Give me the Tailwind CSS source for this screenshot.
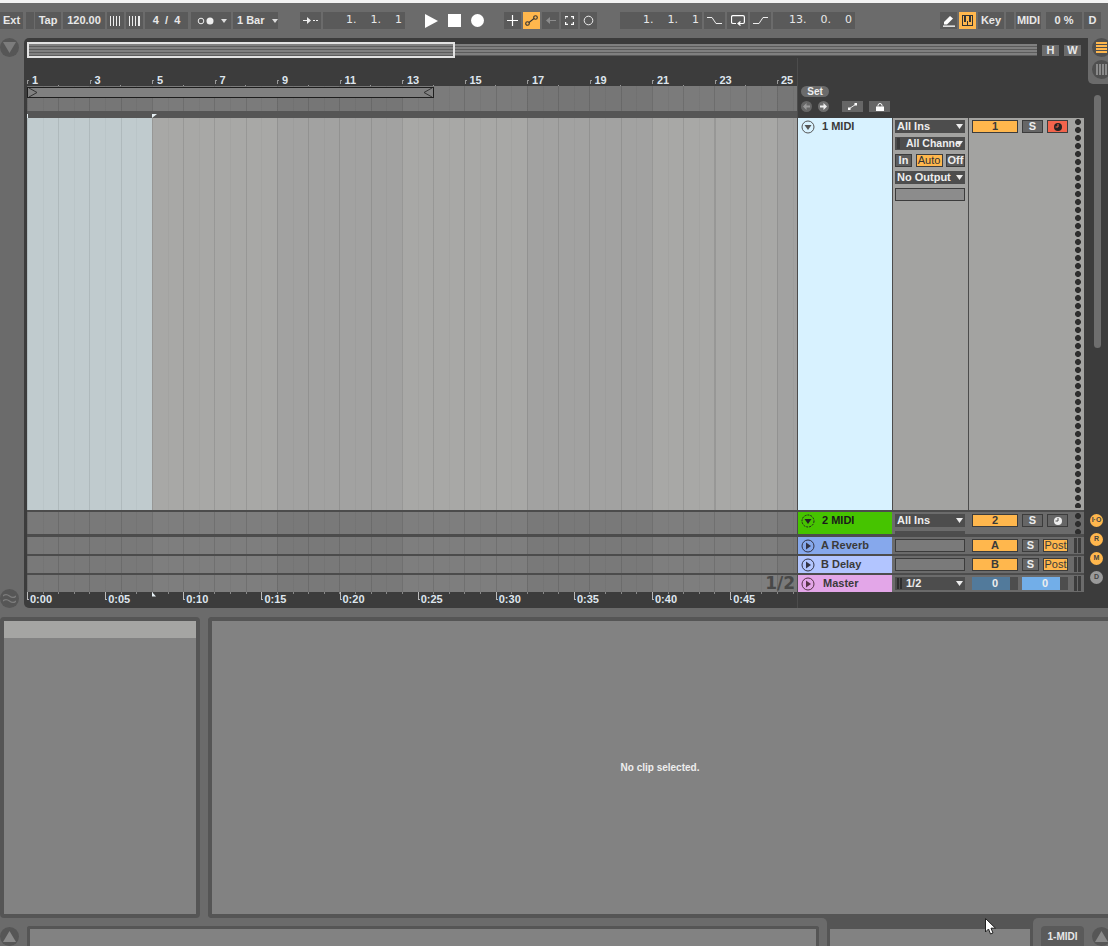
<!DOCTYPE html>
<html lang="en">
<head>
  <meta charset="UTF-8" />
  <title>Live Set</title>
  <script src="https://cdn.jsdelivr.net/npm/@tailwindcss/browser@4"></script>
</head>
<body class="bg-[#6b6b6b] font-['Liberation_Sans',sans-serif] text-[11px] font-bold text-[#e8e8e8]">
<div class="relative w-[1108px] h-[946px] overflow-hidden flex flex-col">

  <!-- top strip -->
  <div class="h-[3px] shrink-0 bg-[#f2f2f2]"></div>

  <!-- transport bar -->
  <div class="h-[35px] shrink-0 pt-[9px] flex items-start whitespace-nowrap">
    <div class="w-[23px] h-[17px] bg-[#5a5a5a] flex items-center justify-center">Ext</div>
    <div class="w-[8px] h-[17px] ml-[3px] bg-[#5a5a5a]"></div>
    <div class="w-[26px] h-[17px] ml-[1px] bg-[#5a5a5a] flex items-center justify-center">Tap</div>
    <div class="w-[42px] h-[17px] ml-[2px] bg-[#5a5a5a] flex items-center justify-center">120.00</div>
    <div class="w-[17px] h-[17px] ml-[2px] bg-[#5a5a5a] flex items-center justify-center">
      <svg width="11" height="10" fill="#eee"><rect x="0" width="1" height="10"/><rect x="3" width="1" height="10"/><rect x="6" width="1" height="10"/><rect x="9" width="1" height="10"/></svg>
    </div>
    <div class="w-[17px] h-[17px] ml-[2px] bg-[#5a5a5a] flex items-center justify-center">
      <svg width="12" height="10" fill="#eee"><rect x="0" width="1" height="10"/><rect x="3" width="1" height="10"/><rect x="6" width="1" height="10"/><rect x="9" width="2" height="10"/></svg>
    </div>
    <div class="w-[43px] h-[17px] ml-[2px] bg-[#5a5a5a] flex items-center justify-center whitespace-pre">4  /  4</div>
    <div class="w-[40px] h-[17px] ml-[3px] bg-[#5a5a5a] flex items-center pl-[6px] gap-[1px]">
      <svg width="20" height="8"><circle cx="4" cy="4" r="2.8" fill="none" stroke="#eee"/><circle cx="13" cy="4" r="3.5" fill="#eee"/></svg>
      <svg class="ml-[3px]" width="6" height="4" fill="#ddd"><path d="M0 0h6L3 4z"/></svg>
    </div>
    <div class="w-[45px] h-[17px] ml-[2px] bg-[#5a5a5a] flex items-center pl-[4px]">1 Bar
      <svg class="ml-[7px]" width="6" height="4" fill="#ddd"><path d="M0 0h6L3 4z"/></svg>
    </div>
    <div class="w-[21px] h-[17px] ml-[22px] bg-[#5a5a5a] flex items-center justify-center">
      <svg width="16" height="7" fill="#eee"><rect y="3" width="6" height="1"/><path d="M4 0l4 3.500-4 3.500z"/><rect x="10" y="3" width="2" height="1"/><rect x="13" y="3" width="2" height="1"/></svg>
    </div>
    <div class="w-[82px] h-[17px] ml-[2px] bg-[#5a5a5a] flex items-center justify-end pr-[3px] font-['DejaVu_Sans',sans-serif] font-normal whitespace-pre">1.    1.    1</div>
    <div class="w-[13px] h-[17px] ml-[20px] flex items-center justify-center">
      <svg width="13" height="14" fill="#fff"><path d="M0 0l13 7L0 14z"/></svg>
    </div>
    <div class="w-[13px] h-[13px] ml-[10px] mt-[2px] bg-white"></div>
    <div class="w-[13px] h-[13px] ml-[10px] mt-[2px] bg-white rounded-full"></div>
    <div class="w-[17px] h-[17px] ml-[20px] bg-[#5a5a5a] flex items-center justify-center">
      <svg width="11" height="11" stroke="#fff" stroke-width="1.200"><path d="M5.500 0v11M0 5.500h11"/></svg>
    </div>
    <div class="w-[17px] h-[17px] ml-[2px] bg-[#ffb74d] flex items-center justify-center">
      <svg width="13" height="11" fill="none" stroke="#333" stroke-width="1.100"><circle cx="2.500" cy="8.500" r="1.800"/><circle cx="10.500" cy="2.500" r="1.800"/><path d="M4 7.500l5-4"/></svg>
    </div>
    <div class="w-[17px] h-[17px] ml-[2px] bg-[#5a5a5a] flex items-center justify-center">
      <svg width="10" height="7" fill="#8c8c8c"><path d="M0 3.500L4 0v3h6v1H4v3z"/></svg>
    </div>
    <div class="w-[17px] h-[17px] ml-[2px] bg-[#5a5a5a] flex items-center justify-center">
      <svg width="9" height="9" fill="none" stroke="#fff" stroke-width="1.200"><path d="M0 3V.6h3M6 .6h2.400V3M8.400 6v2.400H6M3 8.400H.6V6"/></svg>
    </div>
    <div class="w-[17px] h-[17px] ml-[2px] bg-[#5a5a5a] flex items-center justify-center">
      <svg width="11" height="11" fill="none" stroke="#eee"><circle cx="5.500" cy="5.500" r="4.300"/></svg>
    </div>
    <div class="w-[82px] h-[17px] ml-[23px] bg-[#5a5a5a] flex items-center justify-end pr-[3px] font-['DejaVu_Sans',sans-serif] font-normal whitespace-pre">1.    1.    1</div>
    <div class="w-[21px] h-[17px] ml-[2px] bg-[#5a5a5a] flex items-center justify-center">
      <svg width="15" height="9" fill="none" stroke="#eee"><path d="M0 1.500h5l4 6h6"/></svg>
    </div>
    <div class="w-[21px] h-[17px] ml-[2px] bg-[#5a5a5a] flex items-center justify-center">
      <svg width="14" height="12" fill="none" stroke="#fff" stroke-width="1.200"><path d="M5 8.500H2a1.500 1.500 0 0 1-1.500-1.500V2A1.500 1.500 0 0 1 2 .6h10A1.500 1.500 0 0 1 13.400 2v5A1.500 1.500 0 0 1 12 8.500H8"/><path d="M9.500 6.500L7 8.500l2.500 2"/></svg>
    </div>
    <div class="w-[21px] h-[17px] ml-[2px] bg-[#5a5a5a] flex items-center justify-center">
      <svg width="15" height="9" fill="none" stroke="#eee"><path d="M0 7.500h6l4-6h5"/></svg>
    </div>
    <div class="w-[82px] h-[17px] ml-[2px] bg-[#5a5a5a] flex items-center justify-end pr-[3px] font-['DejaVu_Sans',sans-serif] font-normal whitespace-pre">13.    0.    0</div>
    <div class="w-[17px] h-[17px] ml-[85px] bg-[#5a5a5a] flex items-center justify-center">
      <svg width="12" height="13" fill="#fff"><path d="M1 8l6-6 3 2.500-6 6H1z"/><rect y="11.500" width="12" height="1.300"/></svg>
    </div>
    <div class="w-[17px] h-[17px] ml-[2px] bg-[#ffb74d] flex items-center justify-center">
      <svg width="11" height="11"><rect x=".5" y=".5" width="10" height="10" fill="none" stroke="#333"/><rect x="2" y="1" width="2" height="6" fill="#333"/><rect x="7" y="1" width="2" height="6" fill="#333"/><rect x="5" y="6" width="1" height="4" fill="#333"/></svg>
    </div>
    <div class="w-[26px] h-[17px] ml-[2px] bg-[#5a5a5a] flex items-center justify-center">Key</div>
    <div class="w-[8px] h-[17px] ml-[2px] bg-[#5a5a5a]"></div>
    <div class="w-[25px] h-[17px] ml-[2px] bg-[#5a5a5a] flex items-center justify-center">MIDI</div>
    <div class="w-[36px] h-[17px] ml-[5px] bg-[#5a5a5a] flex items-center justify-center">0 %</div>
    <div class="w-[17px] h-[17px] ml-[2px] bg-[#5a5a5a] flex items-center justify-center">D</div>
  </div>

  <!-- arrangement area -->
  <div class="h-[570px] shrink-0 flex items-start">
    <div class="w-[24px] h-full shrink-0 flex flex-col justify-between items-start">
      <div class="w-[19px] h-[19px] rounded-full bg-[#565656] flex items-center justify-center">
        <svg width="13" height="11" fill="#7c7c7c"><path d="M0 0h13L6.500 11z"/></svg>
      </div>
      <div class="w-[19px] h-[19px] rounded-full bg-[#565656] flex items-center justify-center">
        <svg width="13" height="11" fill="none" stroke="#7c7c7c" stroke-width="1.300"><path d="M0 3c2-2 4-2 6.500 0s4.500 2 6.500 0M0 8c2-2 4-2 6.500 0s4.500 2 6.500 0"/></svg>
      </div>
    </div>

    <div class="w-[1084px] shrink-0 h-full bg-[#3c3c3c] rounded-l-[5px] flex">
      <div class="w-[1060px] shrink-0 h-full pl-[3px] pt-[4px] flex flex-col">
        <!-- overview -->
        <div class="h-[16px] shrink-0 relative flex items-center">
          <div class="w-[1010px] h-[12px] bg-[repeating-linear-gradient(180deg,#808080_0,#808080_2px,#5c5c5c_2px,#5c5c5c_3px)]"></div>
          <div class="absolute left-0 top-0 w-[428px] h-[16px] border-[2px] border-[#e2e2e2]"></div>
          <div class="w-[17px] h-[11px] ml-[5px] bg-[#6b6b6b] flex items-center justify-center">H</div>
          <div class="w-[17px] h-[11px] ml-[5px] bg-[#6b6b6b] flex items-center justify-center">W</div>
        </div>

        <div class="flex flex-1 min-h-0">
          <!-- timeline column -->
          <div class="w-[770px] shrink-0 flex flex-col">
            <!-- beat ruler -->
            <div class="h-[28px] shrink-0 flex items-end text-[#dfe6ee] leading-[12px] bg-[repeating-linear-gradient(90deg,transparent_0,transparent_31px,#999_31px,#999_32px,transparent_32px,transparent_62.5px)] bg-[length:100%_1px] bg-bottom bg-no-repeat">
              <div class="w-[62.5px] shrink-0 flex"><span class="border-l border-t border-[#999] w-[2px] h-[4px] mt-[6px] mr-[3px]"></span>1</div>
              <div class="w-[62.5px] shrink-0 flex"><span class="border-l border-t border-[#999] w-[2px] h-[4px] mt-[6px] mr-[3px]"></span>3</div>
              <div class="w-[62.5px] shrink-0 flex"><span class="border-l border-t border-[#999] w-[2px] h-[4px] mt-[6px] mr-[3px]"></span>5</div>
              <div class="w-[62.5px] shrink-0 flex"><span class="border-l border-t border-[#999] w-[2px] h-[4px] mt-[6px] mr-[3px]"></span>7</div>
              <div class="w-[62.5px] shrink-0 flex"><span class="border-l border-t border-[#999] w-[2px] h-[4px] mt-[6px] mr-[3px]"></span>9</div>
              <div class="w-[62.5px] shrink-0 flex"><span class="border-l border-t border-[#999] w-[2px] h-[4px] mt-[6px] mr-[3px]"></span>11</div>
              <div class="w-[62.5px] shrink-0 flex"><span class="border-l border-t border-[#999] w-[2px] h-[4px] mt-[6px] mr-[3px]"></span>13</div>
              <div class="w-[62.5px] shrink-0 flex"><span class="border-l border-t border-[#999] w-[2px] h-[4px] mt-[6px] mr-[3px]"></span>15</div>
              <div class="w-[62.5px] shrink-0 flex"><span class="border-l border-t border-[#999] w-[2px] h-[4px] mt-[6px] mr-[3px]"></span>17</div>
              <div class="w-[62.5px] shrink-0 flex"><span class="border-l border-t border-[#999] w-[2px] h-[4px] mt-[6px] mr-[3px]"></span>19</div>
              <div class="w-[62.5px] shrink-0 flex"><span class="border-l border-t border-[#999] w-[2px] h-[4px] mt-[6px] mr-[3px]"></span>21</div>
              <div class="w-[62.5px] shrink-0 flex"><span class="border-l border-t border-[#999] w-[2px] h-[4px] mt-[6px] mr-[3px]"></span>23</div>
              <div class="w-[20px] flex"><span class="border-l border-t border-[#999] w-[2px] h-[4px] mt-[6px] mr-[2px]"></span>25</div>
            </div>

            <!-- locators + scrub -->
            <div class="h-[25px] shrink-0 relative bg-[repeating-linear-gradient(90deg,rgba(0,0,0,.08)_0,rgba(0,0,0,.08)_1px,transparent_1px,transparent_31.25px),repeating-linear-gradient(90deg,rgba(0,0,0,.04)_0,rgba(0,0,0,.04)_1px,transparent_1px,transparent_15.625px),repeating-linear-gradient(90deg,#767676_0,#767676_125px,#7b7b7b_125px,#7b7b7b_250px)]">
              <div class="absolute left-0 top-[1px] w-[407px] h-[11px] bg-[#808080] border border-[#1e1e1e] flex items-center justify-between px-[1px]">
                <svg width="9" height="9" fill="none" stroke="#333"><path d="M0 0l8 4.500L0 9"/></svg>
                <svg width="9" height="9" fill="none" stroke="#333"><path d="M9 0L1 4.500 9 9"/></svg>
              </div>
            </div>
            <div class="h-[7px] shrink-0 bg-[#555] relative">
              <div class="absolute left-0 top-[3px] w-[1px] h-[4px] bg-[#e8f2f6]"></div>
              <svg class="absolute left-[125px] top-[3px]" width="5" height="4" fill="#e8f2f6"><path d="M0 0h5L0 4z"/></svg>
            </div>

            <!-- track 1 lane -->
            <div class="h-[392px] shrink-0 flex">
              <div class="w-[125px] bg-[repeating-linear-gradient(90deg,rgba(0,0,0,.06)_0,rgba(0,0,0,.06)_1px,transparent_1px,transparent_31.25px),repeating-linear-gradient(90deg,rgba(0,0,0,.03)_0,rgba(0,0,0,.03)_1px,transparent_1px,transparent_15.625px),linear-gradient(#c0cbce,#c0cbce)]"></div>
              <div class="flex-1 bg-[repeating-linear-gradient(90deg,rgba(0,0,0,.07)_0,rgba(0,0,0,.07)_1px,transparent_1px,transparent_31.25px),repeating-linear-gradient(90deg,rgba(0,0,0,.03)_0,rgba(0,0,0,.03)_1px,transparent_1px,transparent_15.625px),repeating-linear-gradient(90deg,#a8a8a6_0,#a8a8a6_125px,#a2a2a1_125px,#a2a2a1_250px)]"></div>
            </div>
            <div class="h-[2px] shrink-0 bg-[#4c4c4c]"></div>
            <div class="h-[22px] shrink-0 bg-[repeating-linear-gradient(90deg,rgba(0,0,0,.08)_0,rgba(0,0,0,.08)_1px,transparent_1px,transparent_31.25px),repeating-linear-gradient(90deg,rgba(0,0,0,.04)_0,rgba(0,0,0,.04)_1px,transparent_1px,transparent_15.625px),repeating-linear-gradient(90deg,#797979_0,#797979_125px,#7e7e7e_125px,#7e7e7e_250px)]"></div>
            <div class="h-[3px] shrink-0 bg-[#4c4c4c]"></div>
            <div class="h-[17px] shrink-0 bg-[repeating-linear-gradient(90deg,rgba(0,0,0,.08)_0,rgba(0,0,0,.08)_1px,transparent_1px,transparent_31.25px),repeating-linear-gradient(90deg,rgba(0,0,0,.04)_0,rgba(0,0,0,.04)_1px,transparent_1px,transparent_15.625px),repeating-linear-gradient(90deg,#797979_0,#797979_125px,#7e7e7e_125px,#7e7e7e_250px)]"></div>
            <div class="h-[2px] shrink-0 bg-[#4c4c4c]"></div>
            <div class="h-[17px] shrink-0 bg-[repeating-linear-gradient(90deg,rgba(0,0,0,.08)_0,rgba(0,0,0,.08)_1px,transparent_1px,transparent_31.25px),repeating-linear-gradient(90deg,rgba(0,0,0,.04)_0,rgba(0,0,0,.04)_1px,transparent_1px,transparent_15.625px),repeating-linear-gradient(90deg,#797979_0,#797979_125px,#7e7e7e_125px,#7e7e7e_250px)]"></div>
            <div class="h-[2px] shrink-0 bg-[#4c4c4c]"></div>
            <div class="h-[17px] shrink-0 relative bg-[repeating-linear-gradient(90deg,rgba(0,0,0,.08)_0,rgba(0,0,0,.08)_1px,transparent_1px,transparent_31.25px),repeating-linear-gradient(90deg,rgba(0,0,0,.04)_0,rgba(0,0,0,.04)_1px,transparent_1px,transparent_15.625px),repeating-linear-gradient(90deg,#797979_0,#797979_125px,#7e7e7e_125px,#7e7e7e_250px)]">
              <span class="absolute right-[2px] top-0 font-['DejaVu_Sans',sans-serif] text-[17px] leading-[17px] text-[#484848]">1/2</span>
            </div>

            <!-- time ruler -->
            <div class="h-[16px] shrink-0 relative flex text-[#dfe6ee] leading-[15px] bg-[repeating-linear-gradient(90deg,#888_0,#888_1px,transparent_1px,transparent_15.625px)] bg-[length:100%_2px] bg-top bg-no-repeat">
              <div class="w-[78.125px] shrink-0 flex"><span class="w-[2px] h-[8px] border-l border-b border-[#bbb] mr-[1px]"></span>0:00</div>
              <div class="w-[78.125px] shrink-0 flex"><span class="w-[2px] h-[8px] border-l border-b border-[#bbb] mr-[1px]"></span>0:05</div>
              <div class="w-[78.125px] shrink-0 flex"><span class="w-[2px] h-[8px] border-l border-b border-[#bbb] mr-[1px]"></span>0:10</div>
              <div class="w-[78.125px] shrink-0 flex"><span class="w-[2px] h-[8px] border-l border-b border-[#bbb] mr-[1px]"></span>0:15</div>
              <div class="w-[78.125px] shrink-0 flex"><span class="w-[2px] h-[8px] border-l border-b border-[#bbb] mr-[1px]"></span>0:20</div>
              <div class="w-[78.125px] shrink-0 flex"><span class="w-[2px] h-[8px] border-l border-b border-[#bbb] mr-[1px]"></span>0:25</div>
              <div class="w-[78.125px] shrink-0 flex"><span class="w-[2px] h-[8px] border-l border-b border-[#bbb] mr-[1px]"></span>0:30</div>
              <div class="w-[78.125px] shrink-0 flex"><span class="w-[2px] h-[8px] border-l border-b border-[#bbb] mr-[1px]"></span>0:35</div>
              <div class="w-[78.125px] shrink-0 flex"><span class="w-[2px] h-[8px] border-l border-b border-[#bbb] mr-[1px]"></span>0:40</div>
              <div class="w-[48px] flex"><span class="w-[2px] h-[8px] border-l border-b border-[#bbb] mr-[1px]"></span>0:45</div>
              <svg class="absolute left-[125px] top-0" width="4" height="5" fill="#e8f2f6"><path d="M0 0l4 4.500H0z"/></svg>
            </div>
          </div>

          <!-- track headers -->
          <div class="w-[287px] shrink-0 border-l border-[#4c4c4c] flex flex-col text-[#3a3a3a]">
            <div class="h-[60px] shrink-0 bg-[#3c3c3c] pl-[3px] flex flex-col text-[#eee]">
              <div class="h-[28px] shrink-0"></div>
              <div class="w-[28px] h-[11px] rounded-full bg-[#6b6b6b] flex items-center justify-center text-[10px]">Set</div>
              <div class="flex items-center mt-[4px]">
                <span class="w-[11px] h-[11px] rounded-full bg-[#666] flex items-center justify-center">
                  <svg width="7" height="7" fill="#9a9a9a"><path d="M0 3.500L3.500 0v2.500H7v2H3.500V7z"/></svg>
                </span>
                <span class="w-[11px] h-[11px] rounded-full bg-[#6e6e6e] ml-[6px] flex items-center justify-center">
                  <svg width="7" height="7" fill="#eee"><path d="M7 3.500L3.500 0v2.500H0v2h3.500V7z"/></svg>
                </span>
                <span class="w-[21px] h-[11px] bg-[#666] ml-[13px] flex items-center justify-center">
                  <svg width="9" height="7" fill="#fff"><path d="M1.500 5.500l6-4" stroke="#fff" stroke-width=".8"/><rect x="0" y="4.500" width="2.500" height="2.500"/><rect x="6.500" y="0" width="2.500" height="2.500"/></svg>
                </span>
                <span class="w-[21px] h-[11px] bg-[#666] ml-[6px] flex items-center justify-center">
                  <svg width="8" height="8"><rect x="0" y="3.500" width="8" height="4.500" fill="#fff"/><path d="M2 3.500V2.500a2 2 0 0 1 4 0v1" fill="none" stroke="#fff"/></svg>
                </span>
              </div>
            </div>

            <!-- track 1 -->
            <div class="h-[392px] shrink-0 flex bg-[#4c4c4c]">
              <div class="w-[94px] bg-[#d8f2ff] flex items-start pl-[3px] pt-[2px]">
                <svg class="shrink-0" width="14" height="14" fill="none" stroke="#555"><circle cx="7" cy="7" r="6"/><path d="M3.500 5h7L7 10z" fill="#555" stroke="none"/></svg>
                <span class="ml-[7px] leading-[12px]">1 MIDI</span>
              </div>
              <div class="w-[75px] ml-[1px] bg-[#a3a3a1] pl-[2px] pr-[3px] pt-[2px] flex flex-col gap-[4px] text-[#eee]">
                <div class="h-[13px] bg-[#4d4d4d] flex items-center justify-between pl-[2px] pr-[2px]">All Ins <svg width="7" height="5" fill="#eee"><path d="M0 0h7L3.500 5z"/></svg></div>
                <div class="h-[13px] bg-[#4d4d4d] flex items-center pr-[2px]">
                  <span class="w-[3px] h-[11px] ml-[2px] bg-[#3a3a3a] shrink-0"></span>
                  <span class="ml-[6px] w-[50px] shrink-0 text-[10.5px] whitespace-nowrap">All Channe</span>
                  <svg class="shrink-0" width="7" height="5" fill="#eee"><path d="M0 0h7L3.500 5z"/></svg>
                </div>
                <div class="flex h-[13px] justify-between">
                  <div class="w-[17px] bg-[#5c5c5c] border border-[#3c3c3c] flex items-center justify-center">In</div>
                  <div class="w-[27px] bg-[#ffb74d] border border-[#3c3c3c] text-[#333] font-normal flex items-center justify-center">Auto</div>
                  <div class="w-[19px] bg-[#5c5c5c] border border-[#3c3c3c] flex items-center justify-center">Off</div>
                </div>
                <div class="h-[13px] bg-[#4d4d4d] flex items-center justify-between pl-[2px] pr-[2px]">No Output <svg width="7" height="5" fill="#eee"><path d="M0 0h7L3.500 5z"/></svg></div>
                <div class="h-[13px] bg-[#8c8c8c] border border-[#3c3c3c]"></div>
              </div>
              <div class="w-[115px] ml-[1px] bg-[#a3a3a1] flex pl-[3px] pt-[2px]">
                <div class="w-[46px] h-[13px] bg-[#ffb74d] border border-[#3c3c3c] flex items-center justify-center">1</div>
                <div class="w-[21px] h-[13px] ml-[4px] bg-[#666] border border-[#3c3c3c] text-[#eee] flex items-center justify-center">S</div>
                <div class="w-[21px] h-[13px] ml-[4px] bg-[#f2644c] border border-[#3c3c3c] flex items-center justify-center">
                  <svg width="8" height="8"><circle cx="4" cy="4" r="4" fill="#222"/><path d="M4 1v3H1.500" fill="none" stroke="#f2644c"/></svg>
                </div>
                <div class="w-[6px] ml-[7px] mt-[-2px] h-[390px] bg-[radial-gradient(circle,#2e2e2e_2.700px,transparent_3.200px)] bg-[length:6px_8px]"></div>
              </div>
            </div>
            <div class="h-[2px] shrink-0 bg-[#4c4c4c]"></div>

            <!-- track 2 -->
            <div class="h-[22px] shrink-0 flex bg-[#6b6b6b]">
              <div class="w-[94px] bg-[#46c400] flex items-start pl-[3px] pt-[2px]">
                <svg class="shrink-0" width="14" height="14" fill="none" stroke="#222"><circle cx="7" cy="7" r="6" stroke-dasharray="2 1"/><path d="M3.500 5h7L7 10z" fill="#222" stroke="none"/></svg>
                <span class="ml-[7px] leading-[12px] text-[#1a1a1a]">2 MIDI</span>
              </div>
              <div class="w-[75px] ml-[1px] pl-[2px] pr-[3px] pt-[2px] overflow-hidden text-[#eee]">
                <div class="h-[13px] bg-[#4d4d4d] flex items-center justify-between pl-[2px] pr-[2px]">All Ins <svg width="7" height="5" fill="#eee"><path d="M0 0h7L3.500 5z"/></svg></div>
                <div class="h-[13px] mt-[4px] bg-[#4d4d4d]"></div>
              </div>
              <div class="w-[115px] ml-[1px] flex pl-[3px] pt-[2px]">
                <div class="w-[46px] h-[13px] bg-[#ffb74d] border border-[#3c3c3c] flex items-center justify-center">2</div>
                <div class="w-[21px] h-[13px] ml-[4px] bg-[#666] border border-[#3c3c3c] text-[#eee] flex items-center justify-center">S</div>
                <div class="w-[21px] h-[13px] ml-[4px] bg-[#666] border border-[#3c3c3c] flex items-center justify-center">
                  <svg width="8" height="8"><circle cx="4" cy="4" r="4" fill="#eee"/><path d="M4 1v3H1.500" fill="none" stroke="#555"/></svg>
                </div>
                <div class="w-[6px] ml-[7px] h-[22px] mt-[-2px] bg-[radial-gradient(circle,#2e2e2e_2.700px,transparent_3.200px)] bg-[length:6px_8px]"></div>
              </div>
            </div>
            <div class="h-[3px] shrink-0 bg-[#4c4c4c]"></div>

            <!-- A Reverb -->
            <div class="h-[17px] shrink-0 flex bg-[#6b6b6b]">
              <div class="w-[94px] bg-[#86a8ec] flex items-center pl-[3px]">
                <svg class="shrink-0" width="14" height="14" fill="none" stroke="#334"><circle cx="7" cy="7" r="6"/><path d="M5 3.500v7L10 7z" fill="#334" stroke="none"/></svg>
                <span class="ml-[6px]">A Reverb</span>
              </div>
              <div class="w-[75px] ml-[1px] pl-[2px] pr-[3px] pt-[2px]"><div class="h-[13px] bg-[#7a7a7a] border border-[#3c3c3c]"></div></div>
              <div class="w-[115px] ml-[1px] flex pl-[3px] pt-[2px]">
                <div class="w-[46px] h-[13px] bg-[#ffb74d] border border-[#3c3c3c] flex items-center justify-center">A</div>
                <div class="w-[17px] h-[13px] ml-[4px] bg-[#666] border border-[#3c3c3c] text-[#eee] flex items-center justify-center">S</div>
                <div class="w-[25px] h-[13px] ml-[4px] bg-[#ffb74d] border border-[#3c3c3c] font-normal flex items-center justify-center">Post</div>
                <div class="w-[7px] ml-[6px] mt-[-1px] h-[15px] bg-[linear-gradient(90deg,#3c3c3c_3px,transparent_3px,transparent_4px,#3c3c3c_4px)]"></div>
              </div>
            </div>
            <div class="h-[2px] shrink-0 bg-[#4c4c4c]"></div>

            <!-- B Delay -->
            <div class="h-[17px] shrink-0 flex bg-[#6b6b6b]">
              <div class="w-[94px] bg-[#b2c5ff] flex items-center pl-[3px]">
                <svg class="shrink-0" width="14" height="14" fill="none" stroke="#334"><circle cx="7" cy="7" r="6"/><path d="M5 3.500v7L10 7z" fill="#334" stroke="none"/></svg>
                <span class="ml-[6px]">B Delay</span>
              </div>
              <div class="w-[75px] ml-[1px] pl-[2px] pr-[3px] pt-[2px]"><div class="h-[13px] bg-[#7a7a7a] border border-[#3c3c3c]"></div></div>
              <div class="w-[115px] ml-[1px] flex pl-[3px] pt-[2px]">
                <div class="w-[46px] h-[13px] bg-[#ffb74d] border border-[#3c3c3c] flex items-center justify-center">B</div>
                <div class="w-[17px] h-[13px] ml-[4px] bg-[#666] border border-[#3c3c3c] text-[#eee] flex items-center justify-center">S</div>
                <div class="w-[25px] h-[13px] ml-[4px] bg-[#ffb74d] border border-[#3c3c3c] font-normal flex items-center justify-center">Post</div>
                <div class="w-[7px] ml-[6px] mt-[-1px] h-[15px] bg-[linear-gradient(90deg,#3c3c3c_3px,transparent_3px,transparent_4px,#3c3c3c_4px)]"></div>
              </div>
            </div>
            <div class="h-[2px] shrink-0 bg-[#4c4c4c]"></div>

            <!-- Master -->
            <div class="h-[17px] shrink-0 flex bg-[#6b6b6b]">
              <div class="w-[94px] bg-[#e3a6e8] flex items-center pl-[3px]">
                <svg class="shrink-0" width="14" height="14" fill="none" stroke="#534"><circle cx="7" cy="7" r="6"/><path d="M5 3.500v7L10 7z" fill="#534" stroke="none"/></svg>
                <span class="ml-[8px]">Master</span>
              </div>
              <div class="w-[75px] ml-[1px] pl-[2px] pr-[3px] pt-[2px] text-[#eee]">
                <div class="h-[13px] bg-[#4d4d4d] flex items-center justify-between pl-[2px] pr-[2px]">
                  <span class="flex items-center"><span class="w-[5px] h-[11px] mr-[4px] bg-[linear-gradient(90deg,#2e2e2e_2px,transparent_2px,transparent_3px,#2e2e2e_3px)]"></span>1/2</span>
                  <svg width="7" height="5" fill="#eee"><path d="M0 0h7L3.500 5z"/></svg>
                </div>
              </div>
              <div class="w-[115px] ml-[1px] flex pl-[3px] pt-[2px]">
                <div class="w-[46px] h-[13px] bg-[#4d4d4d] relative flex items-center justify-center text-[#eee]">
                  <span class="absolute left-0 top-0 bottom-0 w-[38px] bg-[#527a9b]"></span><span class="relative">0</span>
                </div>
                <div class="w-[46px] h-[13px] ml-[4px] bg-[#4d4d4d] relative flex items-center justify-center text-[#eee]">
                  <span class="absolute left-0 top-0 bottom-0 w-[38px] bg-[#72aee8]"></span><span class="relative">0</span>
                </div>
                <div class="w-[7px] ml-[6px] mt-[-1px] h-[15px] bg-[linear-gradient(90deg,#3c3c3c_3px,transparent_3px,transparent_4px,#3c3c3c_4px)]"></div>
              </div>
            </div>
          </div>
        </div>
      </div>

      <!-- right rail -->
      <div class="w-[24px] shrink-0 h-full flex flex-col items-start">
        <div class="w-[20px] h-[46px] ml-[4px] shrink-0 bg-[#6b6b6b] rounded-bl-[5px] pl-[4px]">
          <div class="w-[19px] h-[19px] rounded-full bg-[#4f4f4f] flex items-center justify-center">
            <svg width="11" height="11" fill="#ffb74d"><rect width="11" height="2"/><rect y="3" width="11" height="2"/><rect y="6" width="11" height="2"/><rect y="9" width="11" height="2"/></svg>
          </div>
          <div class="w-[19px] h-[19px] mt-[3px] rounded-full bg-[#4f4f4f] flex items-center justify-center">
            <svg width="11" height="11" fill="#8a8a8a"><rect width="2" height="11"/><rect x="3" width="2" height="11"/><rect x="6" width="2" height="11"/><rect x="9" width="2" height="11"/></svg>
          </div>
        </div>
        <div class="ml-[10px] mt-[11px] w-[7px] h-[253px] shrink-0 rounded-full bg-[#6e6e6e]"></div>
        <div class="flex flex-col gap-[6px] ml-[6px] mt-[166px] text-[7px] text-[#444]">
          <span class="w-[13px] h-[13px] rounded-full bg-[#ffb74d] flex items-center justify-center">I·O</span>
          <span class="w-[13px] h-[13px] rounded-full bg-[#ffb74d] flex items-center justify-center">R</span>
          <span class="w-[13px] h-[13px] rounded-full bg-[#ffb74d] flex items-center justify-center">M</span>
          <span class="w-[13px] h-[13px] rounded-full bg-[#9a9a9a] flex items-center justify-center">D</span>
        </div>
      </div>
    </div>
  </div>

  <!-- detail area -->
  <div class="h-[301px] shrink-0 mt-[9px] flex">
    <div class="w-[200px] shrink-0 h-full bg-[#828282] border-[4px] border-[#555] rounded-[4px]">
      <div class="h-[17px] bg-[#a5a5a3]"></div>
    </div>
    <div class="ml-[8px] flex-1 h-full bg-[#828282] border-[4px] border-r-0 border-[#555] rounded-l-[4px] flex items-center justify-center text-[#eee] text-[10px]">
      <span>No clip selected.</span>
    </div>
  </div>

  <!-- status bar -->
  <div class="h-[28px] shrink-0 flex bg-[#555]">
    <div class="w-[827px] shrink-0 h-full bg-[#6b6b6b] rounded-tr-[5px] flex items-start">
      <div class="w-[19px] h-[19px] mt-[9px] rounded-full bg-[#565656] flex items-center justify-center">
        <svg width="13" height="11" fill="#8a8a8a"><path d="M0 11h13L6.500 0z"/></svg>
      </div>
      <div class="ml-[8px] mt-[8px] w-[792px] h-[20px] bg-[#828282] border-[3px] border-b-0 border-[#555] rounded-t-[3px]"></div>
    </div>
    <div class="w-[206px] shrink-0 h-full pl-[3px] pt-[11px]">
      <div class="w-[200px] h-[17px] bg-[#828282]"></div>
    </div>
    <div class="flex-1 h-full bg-[#6b6b6b] rounded-tl-[5px] pl-[8px] pt-[8px] flex items-start">
      <div class="w-[43px] h-[20px] shrink-0 rounded-t-[4px] bg-[#5a5a5a] flex items-center justify-center text-[10px]">1-MIDI</div>
      <div class="w-[19px] h-[19px] shrink-0 ml-[8px] mt-[1px] rounded-full bg-[#565656] flex items-center justify-center">
        <svg width="13" height="11" fill="#8a8a8a"><path d="M0 11h13L6.500 0z"/></svg>
      </div>
    </div>
  </div>

  <!-- mouse pointer -->
  <svg class="absolute left-[985px] top-[918px]" width="12" height="18"><path d="M.5.5v13.500l3-3 2 5 2.500-1-2-4.800h4.500z" fill="#fff" stroke="#222"/></svg>
</div>
</body>
</html>
